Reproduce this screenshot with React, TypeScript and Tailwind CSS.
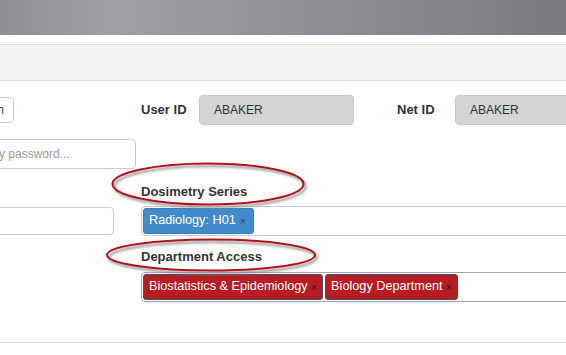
import React from "react";

type Tag = { label: string; tone: "blue" | "red" };

const dosimetryTags: Tag[] = [{ label: "Radiology: H01", tone: "blue" }];
const departmentTags: Tag[] = [
  { label: "Biostatistics & Epidemiology", tone: "red" },
  { label: "Biology Department", tone: "red" },
];

function TagChip({ tag }: { tag: Tag }) {
  if (tag.tone === "blue") {
    return (
      <span className="flex h-[26px] shrink-0 items-center rounded-[3px] border border-[#3a7dba] bg-[#428bca] pl-[5px] pr-[7px] text-[12.7px] text-white">
        {tag.label}
        <span className="ml-[4px] text-[11px] text-[#2b4a68]">×</span>
      </span>
    );
  }
  return (
    <span className="flex h-[26px] shrink-0 items-center rounded-[3px] border border-[#34507c] bg-[#b71c23] pl-[5px] pr-[5px] text-[12.7px] text-white">
      {tag.label}
      <span className="ml-[3px] text-[11px] text-[#4a1318]">×</span>
    </span>
  );
}

function ReadonlyField({ label, value }: { label: string; value: string }) {
  return (
    <div className="flex items-center">
      <span className="w-[58px] text-[13px] font-bold">{label}</span>
      <div className="flex h-[30px] w-[155px] items-center rounded-[4px] border border-[#c8c8c8] bg-[#d4d4d4] px-[14px] text-[12px]">
        {value}
      </div>
    </div>
  );
}

function Annotations() {
  return (
    <svg
      className="pointer-events-none absolute left-0 top-0"
      width={566}
      height={355}
      viewBox="0 0 566 355"
    >
      <defs>
        <filter id="blur" x="-10%" y="-30%" width="120%" height="160%">
          <feGaussianBlur stdDeviation="1.2" />
        </filter>
      </defs>
      <g fill="none" stroke="#8a8a8a" strokeWidth="2.5" filter="url(#blur)" opacity="0.8">
        <ellipse cx="210" cy="186.5" rx="95.5" ry="20.5" />
        <ellipse cx="213" cy="257.5" rx="104" ry="15.5" />
      </g>
      <g fill="none" stroke="#b3141c" strokeWidth="2">
        <ellipse cx="208" cy="184" rx="95.5" ry="20.5" />
        <ellipse cx="211" cy="255" rx="104" ry="15.5" />
      </g>
    </svg>
  );
}

export default function App() {
  return (
    <div className="relative h-[355px] w-[566px] overflow-hidden bg-white font-['Liberation_Sans',Arial,sans-serif] text-[#333]">
      <div className="h-[35px] bg-linear-to-r from-[#8f9096] via-[#9fa0a5] via-20% to-[#7a7a80]" />
      <div className="mt-[9px] h-[37px] border-y border-[#dcdcdc] bg-[#f4f4f4]" />

      <div className="mt-[14px] flex flex-col">
        <div className="flex h-[30px] items-center">
          <div className="flex w-[136px] shrink-0 justify-end">
            <button className="mr-[122px] flex h-[26px] shrink-0 items-center rounded-[4px] border border-[#ccc] bg-white pl-[10px] pr-[9px] text-[12px] text-[#23527c]">
              Search
            </button>
          </div>
          <div className="ml-[5px] flex items-center gap-[43px]">
            <ReadonlyField label="User ID" value="ABAKER" />
            <ReadonlyField label="Net ID" value="ABAKER" />
          </div>
        </div>

        <div className="mt-[14px] flex h-[30px]">
          <div className="flex w-[136px] shrink-0 justify-end">
            <div className="flex h-[30px] w-[174px] shrink-0 items-center rounded-[4px] border border-[#ccc] bg-white px-[12px] text-[12px] text-[#999]">
              Verify password...
            </div>
          </div>
        </div>

        <div className="mt-[13px] flex h-[20px] items-center pl-[141px] text-[13px] font-bold">
          Dosimetry Series
        </div>

        <div className="mt-[4px] flex h-[30px] items-center">
          <div className="flex w-[136px] shrink-0 justify-end">
            <div className="mr-[22px] h-[28px] w-[160px] shrink-0 rounded-[4px] border border-[#ccc] bg-white" />
          </div>
          <div className="ml-[5px] flex h-[30px] w-[500px] shrink-0 items-center gap-[2px] rounded-[4px] border border-[#ccc] bg-white p-[1px]">
            {dosimetryTags.map((tag) => (
              <TagChip key={tag.label} tag={tag} />
            ))}
          </div>
        </div>

        <div className="mt-[11px] flex h-[20px] items-center pl-[141px] text-[13px] font-bold">
          Department Access
        </div>

        <div className="mt-[5px] flex h-[30px] pl-[141px]">
          <div className="flex h-[30px] w-[500px] shrink-0 items-center gap-[2px] rounded-[4px] border border-[#a6a6a6] bg-white p-[1px]">
            {departmentTags.map((tag) => (
              <TagChip key={tag.label} tag={tag} />
            ))}
          </div>
        </div>

        <div className="mt-[40px] border-t border-[#dcdcdc]" />
      </div>

      <Annotations />
    </div>
  );
}
